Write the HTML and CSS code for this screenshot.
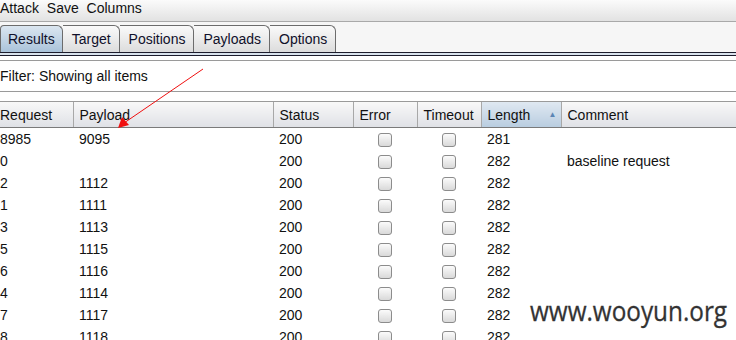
FILE: index.html
```html
<!DOCTYPE html>
<html lang="en">
<head>
  <meta charset="UTF-8" />
  <title>Intruder attack results</title>
  <link rel="stylesheet" href="styles.css">
</head>
<body>
  <div class="menubar">
    <span>Attack</span>
    <span>Save</span>
    <span>Columns</span>
  </div>

  <div class="tabs">
    <div class="tab active">Results</div>
    <div class="tab">Target</div>
    <div class="tab">Positions</div>
    <div class="tab">Payloads</div>
    <div class="tab">Options</div>
  </div>
  <div class="tabline"></div>

  <div class="filter">Filter: Showing all items</div>

  <div class="results">
    <table>
      <colgroup>
        <col style="width:73px">
        <col style="width:200px">
        <col style="width:80px">
        <col style="width:64px">
        <col style="width:64px">
        <col style="width:80px">
        <col>
      </colgroup>
      <thead>
        <tr>
          <th>Request</th>
          <th>Payload</th>
          <th>Status</th>
          <th>Error</th>
          <th>Timeout</th>
          <th class="sorted">Length <span class="sort">&#9650;</span></th>
          <th>Comment</th>
        </tr>
      </thead>
      <tbody id="rows"></tbody>
    </table>
  </div>

  <svg class="arrow" width="736" height="340" viewBox="0 0 736 340">
    <line x1="203" y1="69" x2="124" y2="123" stroke="#f01010" stroke-width="1" />
    <polygon points="118,128 122,117 129,125" fill="#f01010" />
  </svg>

  <div class="watermark">www.wooyun.org</div>

  <script>
    const data = [
      ["8985", "9095", "200", "281", ""],
      ["0", "", "200", "282", "baseline request"],
      ["2", "1112", "200", "282", ""],
      ["1", "1111", "200", "282", ""],
      ["3", "1113", "200", "282", ""],
      ["5", "1115", "200", "282", ""],
      ["6", "1116", "200", "282", ""],
      ["4", "1114", "200", "282", ""],
      ["7", "1117", "200", "282", ""],
      ["8", "1118", "200", "282", ""]
    ];

    const rows = document.getElementById("rows");
    for (let r of data) {
      const tr = document.createElement("tr");
      tr.innerHTML = `
        <td>${r[0]}</td>
        <td>${r[1]}</td>
        <td>${r[2]}</td>
        <td class="check"><span class="box"></span></td>
        <td class="check"><span class="box"></span></td>
        <td>${r[3]}</td>
        <td>${r[4]}</td>
      `;
      rows.appendChild(tr);
    }
  </script>
</body>
</html>
```

FILE: styles.css
```css
body {
  margin: 0;
  width: 736px;
  height: 340px;
  overflow: hidden;
  font-family: "Liberation Sans", Arial, sans-serif;
  font-size: 14px;
  color: #111;
  background: #fff;
}

.menubar {
  height: 21px;
  line-height: 17px;
  background: linear-gradient(#fbfbfb, #e2e2e2);
  border-bottom: 1px solid #a9a9a9;
}

.menubar span {
  margin-right: 4px;
}

.tabs {
  display: flex;
  height: 27px;
  padding-top: 3px;
  background: #f6f6f6;
}

.tab {
  height: 26px;
  line-height: 27px;
  padding: 0 8px 0 9px;
  border: 1px solid #6c6c6c;
  border-bottom: none;
  border-left: none;
  border-top-right-radius: 6px;
  background: linear-gradient(#fafafa, #dcdcdc);
  color: #10102a;
}

.tab:first-child {
  padding: 0 7px;
  border-left: 1px solid #6c6c6c;
  border-top-left-radius: 4px;
}

.tab.active {
  background: linear-gradient(#dbe6f0, #aac3da);
}

.tabline {
  height: 2px;
  border-top: 1px solid #1c1c2c;
  border-bottom: 1px solid #1c1c2c;
  background: #d8e2ec;
  margin-bottom: 4px;
}

.filter {
  height: 30px;
  line-height: 30px;
  border-top: 1px solid #9a9a9a;
  border-bottom: 1px solid #9a9a9a;
  margin-bottom: 9px;
}

.results {
  border-top: 1px solid #9a9a9a;
}

table {
  border-collapse: collapse;
  table-layout: fixed;
  width: 736px;
}

th {
  height: 25px;
  padding: 0 6px;
  text-align: left;
  font-weight: normal;
  background: linear-gradient(#f8f8f8, #dfe1e6);
  border-left: 1px solid #a8a8a8;
  border-bottom: 1px solid #7a7a7a;
  white-space: nowrap;
}

th:first-child {
  border-left: none;
  padding-left: 0;
}

th.sorted {
  background: linear-gradient(#dfe8f1, #b9cde0);
  position: relative;
}

.sort {
  position: absolute;
  right: 4px;
  top: 8px;
  font-size: 8px;
  color: #5a85b4;
}

td {
  height: 22px;
  padding: 0 6px;
  white-space: nowrap;
}

td:first-child {
  padding-left: 0;
}

td.check {
  text-align: center;
}

.box {
  display: inline-block;
  width: 12px;
  height: 12px;
  vertical-align: middle;
  border: 1px solid #8c8c8c;
  border-radius: 3px;
  background: linear-gradient(#fbfbfb, #d9d9d9);
}

.arrow {
  position: absolute;
  left: 0;
  top: 0;
  pointer-events: none;
}

.watermark {
  position: absolute;
  left: 530px;
  top: 292px;
  font-family: "Open Sans", sans-serif;
  font-size: 27px;
  color: #333;
  -webkit-text-stroke: 0.3px #333;
  transform: scaleX(0.9);
  transform-origin: left top;
  white-space: nowrap;
}
```
